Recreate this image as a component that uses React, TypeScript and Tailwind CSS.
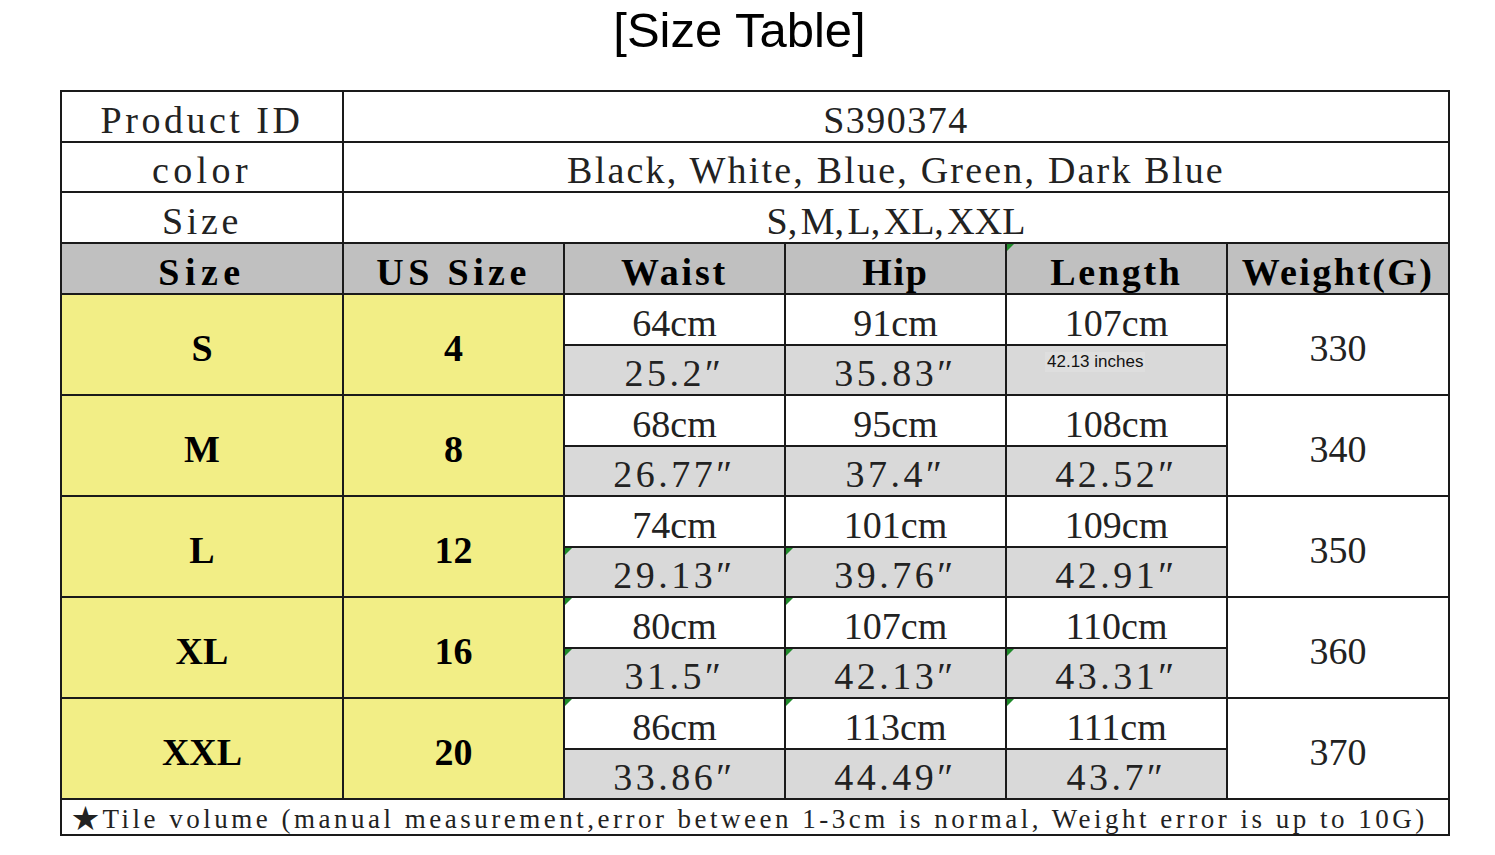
import React from 'react';

type Row = {
  size: string;
  us: string;
  waist: [string, string];
  hip: [string, string];
  length: [string, string | null];
  weight: string;
  marks?: { cm?: string[]; inch?: string[] };
};

const rows: Row[] = [
  { size: 'S', us: '4', waist: ['64cm', '25.2″'], hip: ['91cm', '35.83″'], length: ['107cm', null], weight: '330' },
  { size: 'M', us: '8', waist: ['68cm', '26.77″'], hip: ['95cm', '37.4″'], length: ['108cm', '42.52″'], weight: '340' },
  {
    size: 'L', us: '12', waist: ['74cm', '29.13″'], hip: ['101cm', '39.76″'], length: ['109cm', '42.91″'], weight: '350',
    marks: { inch: ['waist', 'hip'] },
  },
  {
    size: 'XL', us: '16', waist: ['80cm', '31.5″'], hip: ['107cm', '42.13″'], length: ['110cm', '43.31″'], weight: '360',
    marks: { cm: ['waist', 'hip'], inch: ['waist', 'hip', 'length'] },
  },
  {
    size: 'XXL', us: '20', waist: ['86cm', '33.86″'], hip: ['113cm', '44.49″'], length: ['111cm', '43.7″'], weight: '370',
    marks: { cm: ['waist', 'hip', 'length'] },
  },
];

const serif = "font-['Liberation_Serif','Noto_Sans_CJK_SC',serif]";
const cell = 'border-2 border-[#1a1a1a] text-center align-middle p-0 pt-[6px] relative leading-none';

function Mark() {
  return (
    <span className="absolute left-0 top-0 w-0 h-0 border-t-[7px] border-r-[7px] border-t-[#1f8a2a] border-r-transparent" />
  );
}

function Measure({ value, mark, grey }: { value: string; mark?: boolean; grey?: boolean }) {
  return (
    <td
      className={`${cell} text-[38px] text-[#222] ${
        grey ? 'h-[50px] bg-[#d9d9d9] tracking-[3.5px]' : 'h-[51px] bg-white'
      }`}
    >
      {mark && <Mark />}
      {value}
    </td>
  );
}

export default function App() {
  return (
    <div className="min-h-[855px] w-[1495px] bg-white">
      <div className="h-[90px] flex justify-center pr-[16px] pt-[6px]">
        <h1 className="font-['Liberation_Sans',Arial,sans-serif] text-[49px] leading-none text-black">[Size Table]</h1>
      </div>

      <div className="pl-[60px]">
        <table className={`${serif} w-[1388px] table-fixed border-collapse border-2 border-[#1a1a1a]`}>
          <colgroup>
            <col className="w-[282px]" />
            <col className="w-[221px]" />
            <col className="w-[221px]" />
            <col className="w-[221px]" />
            <col className="w-[221px]" />
            <col className="w-[222px]" />
          </colgroup>
          <tbody>
            {/* info rows */}
            <tr className="h-[51px] text-[38px] text-[#222]">
              <td className={`${cell} tracking-[3.5px]`}>Product ID</td>
              <td className={`${cell} tracking-[1.5px]`} colSpan={5}>S390374</td>
            </tr>
            <tr className="h-[50px] text-[38px] text-[#222]">
              <td className={`${cell} tracking-[4.4px]`}>color</td>
              <td className={`${cell} tracking-[2.2px]`} colSpan={5}>Black, White, Blue, Green, Dark Blue</td>
            </tr>
            <tr className="h-[51px] text-[38px] text-[#222]">
              <td className={`${cell} tracking-[3.6px]`}>Size</td>
              <td className={`${cell} [word-spacing:-6px]`} colSpan={5}>S, M, L, XL, XXL</td>
            </tr>

            {/* header */}
            <tr className="h-[51px] bg-[#c0c0c0] text-[38px] font-bold text-black">
              <td className={`${cell} tracking-[5.5px]`}>Size</td>
              <td className={`${cell} tracking-[4.4px]`}>US Size</td>
              <td className={`${cell} tracking-[2.8px]`}>Waist</td>
              <td className={`${cell} tracking-[1.7px]`}>Hip</td>
              <td className={`${cell} tracking-[2.7px]`}>
                <Mark />
                Length
              </td>
              <td className={`${cell} tracking-[2.4px]`}>Weight(G)</td>
            </tr>

            {rows.map((r) => (
              <React.Fragment key={r.size}>
                <tr>
                  <td rowSpan={2} className={`${cell} bg-[#f2ee86] text-[38px] font-bold text-black`}>{r.size}</td>
                  <td rowSpan={2} className={`${cell} bg-[#f2ee86] text-[38px] font-bold text-black`}>{r.us}</td>
                  <Measure value={r.waist[0]} mark={r.marks?.cm?.includes('waist')} />
                  <Measure value={r.hip[0]} mark={r.marks?.cm?.includes('hip')} />
                  <Measure value={r.length[0]} mark={r.marks?.cm?.includes('length')} />
                  <td rowSpan={2} className={`${cell} bg-white text-[38px] text-[#222]`}>{r.weight}</td>
                </tr>
                <tr>
                  <Measure value={r.waist[1]} mark={r.marks?.inch?.includes('waist')} grey />
                  <Measure value={r.hip[1]} mark={r.marks?.inch?.includes('hip')} grey />
                  {r.length[1] ? (
                    <Measure value={r.length[1]} mark={r.marks?.inch?.includes('length')} grey />
                  ) : (
                    <td className="border-2 border-[#1a1a1a] p-0 h-[50px] bg-[#d9d9d9] align-top">
                      <div className="flex pt-[6px] pl-[38px]">
                        <span className="bg-[#dedede] px-[2px] font-['Liberation_Sans',Arial,sans-serif] text-[17px] leading-[20px] text-[#111]">
                          42.13 inches
                        </span>
                      </div>
                    </td>
                  )}
                </tr>
              </React.Fragment>
            ))}

            {/* footer */}
            <tr className="h-[36px]">
              <td
                colSpan={6}
                className="border-2 border-[#1a1a1a] p-0 pt-[4px] pl-[10px] text-left text-[27px] leading-none tracking-[3.5px] text-[#222] whitespace-nowrap"
              >
                ★Tile volume (manual measurement,error between 1-3cm is normal, Weight error is up to 10G)
              </td>
            </tr>
          </tbody>
        </table>
      </div>
    </div>
  );
}
